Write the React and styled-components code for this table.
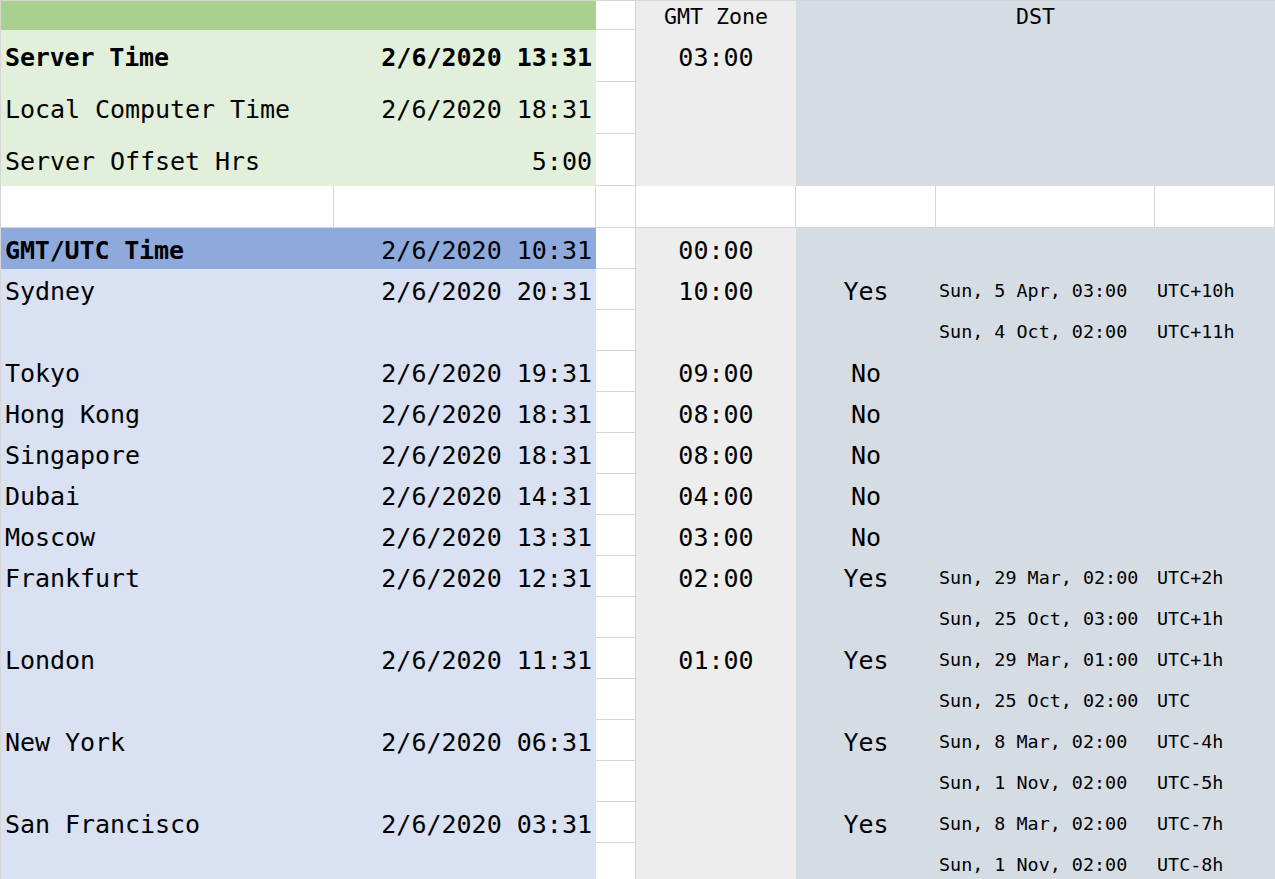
import React from "react";
import styled, { createGlobalStyle, css } from "styled-components";

const Global = createGlobalStyle`
  html, body { margin: 0; padding: 0; overflow: hidden; background: #fff; }
  body { font-family: "DejaVu Sans Mono", "Liberation Mono", monospace; color: #000; }
`;

const LINE = "#d6d6d6";
const TONES = {
  head: "#a9d08e",
  green: "#e2efda",
  blue: "#8ea9db",
  lav: "#d9e1f2",
  zone: "#ededed",
  dst: "#d6dce4",
  white: "#ffffff",
};

const Sheet = styled.div`
  display: grid;
  grid-template-columns: 333px 262px 40px 160px 140px 219px 120px;
  grid-template-rows: 29px 52px 52px 52px 42px repeat(16, 41px);
  border-top: 1px solid ${LINE};
  border-left: 1px solid ${LINE};
  width: 1274px;
  font-family: "DejaVu Sans Mono", "Liberation Mono", monospace;
`;

const Cell = styled.div`
  box-sizing: border-box;
  display: flex;
  align-items: center;
  min-width: 0;
  white-space: nowrap;
  overflow: hidden;
  background: ${(p) => TONES[p.$tone || "white"]};
  grid-column: span ${(p) => p.$span || 1};
  padding-top: ${(p) => (p.$tall ? 2 : 4)}px;
  font-size: 25px;
  font-weight: ${(p) => (p.$bold ? 700 : 400)};
  ${(p) =>
    (!p.$tone || p.$tone === "white") &&
    css`
      border-right: 1px solid ${LINE};
      border-bottom: 1px solid ${LINE};
    `}
`;

const HeadCell = styled(Cell)`
  justify-content: center;
  font-size: 21.6px;
  padding-top: 2px;
`;

const NameCell = styled(Cell)`
  padding-left: 4px;
  letter-spacing: ${(p) => (p.$bold ? "-0.15px" : "-0.05px")};
`;

const TimeCell = styled(Cell)`
  justify-content: flex-end;
  padding-right: 4px;
`;

const ZoneCell = styled(Cell)`
  justify-content: center;
`;

const FlagCell = styled(Cell)`
  justify-content: center;
`;

const DateCell = styled(Cell)`
  font-size: 18.4px;
  padding-left: 3px;
  padding-top: 2px;
`;

const OffsetCell = styled(Cell)`
  font-size: 18.4px;
  padding-left: 2px;
  padding-top: 2px;
`;

const topRows = [
  { name: "Server Time", time: "2/6/2020 13:31", zone: "03:00", bold: true },
  { name: "Local Computer Time", time: "2/6/2020 18:31", zone: "" },
  { name: "Server Offset Hrs", time: "5:00", zone: "" },
];

const cities = [
  { name: "GMT/UTC Time", time: "2/6/2020 10:31", zone: "00:00", flag: "", date: "", off: "", tone: "blue", bold: true },
  { name: "Sydney", time: "2/6/2020 20:31", zone: "10:00", flag: "Yes", date: "Sun, 5 Apr, 03:00", off: "UTC+10h" },
  { name: "", time: "", zone: "", flag: "", date: "Sun, 4 Oct, 02:00", off: "UTC+11h" },
  { name: "Tokyo", time: "2/6/2020 19:31", zone: "09:00", flag: "No", date: "", off: "" },
  { name: "Hong Kong", time: "2/6/2020 18:31", zone: "08:00", flag: "No", date: "", off: "" },
  { name: "Singapore", time: "2/6/2020 18:31", zone: "08:00", flag: "No", date: "", off: "" },
  { name: "Dubai", time: "2/6/2020 14:31", zone: "04:00", flag: "No", date: "", off: "" },
  { name: "Moscow", time: "2/6/2020 13:31", zone: "03:00", flag: "No", date: "", off: "" },
  { name: "Frankfurt", time: "2/6/2020 12:31", zone: "02:00", flag: "Yes", date: "Sun, 29 Mar, 02:00", off: "UTC+2h" },
  { name: "", time: "", zone: "", flag: "", date: "Sun, 25 Oct, 03:00", off: "UTC+1h" },
  { name: "London", time: "2/6/2020 11:31", zone: "01:00", flag: "Yes", date: "Sun, 29 Mar, 01:00", off: "UTC+1h" },
  { name: "", time: "", zone: "", flag: "", date: "Sun, 25 Oct, 02:00", off: "UTC" },
  { name: "New York", time: "2/6/2020 06:31", zone: "", flag: "Yes", date: "Sun, 8 Mar, 02:00", off: "UTC-4h" },
  { name: "", time: "", zone: "", flag: "", date: "Sun, 1 Nov, 02:00", off: "UTC-5h" },
  { name: "San Francisco", time: "2/6/2020 03:31", zone: "", flag: "Yes", date: "Sun, 8 Mar, 02:00", off: "UTC-7h" },
  { name: "", time: "", zone: "", flag: "", date: "Sun, 1 Nov, 02:00", off: "UTC-8h" },
];

export default function App() {
  return (
    <>
      <Global />
      <Sheet>
        <HeadCell $tone="head" $span={2} />
        <Cell />
        <HeadCell $tone="zone">GMT Zone</HeadCell>
        <HeadCell $tone="dst" $span={3}>DST</HeadCell>

        {topRows.map((r, i) => (
          <React.Fragment key={"t" + i}>
            <NameCell $tone="green" $tall $bold={r.bold}>{r.name}</NameCell>
            <TimeCell $tone="green" $tall $bold={r.bold}>{r.time}</TimeCell>
            <Cell $tall />
            <ZoneCell $tone="zone" $tall>{r.zone}</ZoneCell>
            <Cell $tone="dst" $span={3} $tall />
          </React.Fragment>
        ))}

        <Cell />
        <Cell />
        <Cell />
        <Cell />
        <Cell />
        <Cell />
        <Cell />

        {cities.map((c, i) => (
          <React.Fragment key={"c" + i}>
            <NameCell $tone={c.tone || "lav"} $bold={c.bold}>{c.name}</NameCell>
            <TimeCell $tone={c.tone || "lav"}>{c.time}</TimeCell>
            <Cell />
            <ZoneCell $tone="zone">{c.zone}</ZoneCell>
            <FlagCell $tone="dst">{c.flag}</FlagCell>
            <DateCell $tone="dst">{c.date}</DateCell>
            <OffsetCell $tone="dst">{c.off}</OffsetCell>
          </React.Fragment>
        ))}
      </Sheet>
    </>
  );
}
